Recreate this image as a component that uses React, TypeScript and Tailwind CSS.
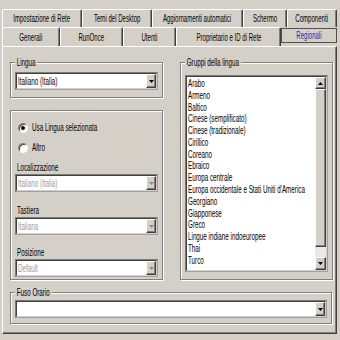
import type { ReactNode } from 'react';

// Text in the reference is squeezed horizontally, so labels are narrowed with scale-x
function T({ children, className = '' }: { children: ReactNode; className?: string }) {
  return (
    <span className={`inline-block whitespace-nowrap origin-left scale-x-[0.57] ${className}`}>{children}</span>
  );
}

const row1 = [
  { label: 'Impostazione di Rete', w: 'w-[80px]' },
  { label: 'Temi del Desktop', w: 'w-[70px]' },
  { label: 'Aggiornamenti automatici', w: 'w-[91px]' },
  { label: 'Schermo', w: 'w-[44px]' },
  { label: 'Componenti', w: 'w-[50px]' },
];

const row2 = [
  { label: 'Generali', w: 'w-[58px]' },
  { label: 'RunOnce', w: 'w-[63px]' },
  { label: 'Utenti', w: 'w-[53px]' },
  { label: 'Proprietario e ID di Rete', w: 'w-[105px]' },
];

const groups = [
  'Arabo',
  'Armeno',
  'Baltico',
  'Cinese (semplificato)',
  'Cinese (tradizionale)',
  'Cirillico',
  'Coreano',
  'Ebraico',
  'Europa centrale',
  "Europa occidentale e Stati Uniti d'America",
  'Georgiano',
  'Giapponese',
  'Greco',
  'Lingue indiane indoeuropee',
  'Thai',
  'Turco',
];

function Tab({ label, w }: { label: string; w: string }) {
  return (
    <div
      className={`${w} h-full flex items-center justify-center border-t border-l border-white border-r border-r-[#404040] rounded-t-[2px] shadow-[inset_-1px_0_0_#808080] overflow-visible`}
    >
      <span className="inline-block whitespace-nowrap origin-center scale-x-[0.55] text-[11px] leading-[13px] text-black">
        {label}
      </span>
    </div>
  );
}

function Arrow({ up = false, disabled = false }: { up?: boolean; disabled?: boolean }) {
  return (
    <svg width="5" height="3" viewBox="0 0 5 3">
      <path d={up ? 'M2.5 0L5 3H0Z' : 'M0 0H5L2.5 3Z'} fill={disabled ? '#8a8a8a' : '#000'} />
    </svg>
  );
}

function RaisedButton({ className = '', children }: { className?: string; children?: ReactNode }) {
  return (
    <div
      className={`flex items-center justify-center bg-[#d4d0c8] border border-t-white border-l-white border-b-[#404040] border-r-[#404040] shadow-[inset_-1px_-1px_0_#808080] ${className}`}
    >
      {children}
    </div>
  );
}

function Select({ value = '', disabled = false, w }: { value?: string; disabled?: boolean; w: string }) {
  return (
    <div className={`${w} h-[18px] border border-[#7a7a7a] border-b-[#a0a0a0] border-r-[#a0a0a0]`}>
      <div className="h-full flex border border-t-[#404040] border-l-[#404040] border-b-[#d4d0c8] border-r-[#d4d0c8] bg-white">
        <div className="flex-1 flex items-center pl-[1px] overflow-visible">
          <T className={`text-[11px] leading-[13px] ${disabled ? 'text-[#9c9c9c]' : 'text-black'}`}>{value}</T>
        </div>
        <RaisedButton className="w-[10px] h-full">
          <Arrow disabled={disabled} />
        </RaisedButton>
      </div>
    </div>
  );
}

function Group({ label, className = '', children }: { label: string; className?: string; children?: ReactNode }) {
  return (
    <div className={`relative border border-[#808080] shadow-[inset_1px_1px_0_#fff,1px_1px_0_#fff] ${className}`}>
      {label && (
        <span className="absolute -top-[7px] left-[4px] inline-block whitespace-nowrap origin-left scale-x-[0.57] px-[3px] bg-[#d4d0c8] text-[11px] leading-[13px] text-black">
          {label}
        </span>
      )}
      {children}
    </div>
  );
}

function Radio({ label, checked = false }: { label: string; checked?: boolean }) {
  return (
    <div className="flex items-center h-[13px] pl-[3px]">
      <div className="w-[10px] h-[10px] rounded-full border border-[#808080] border-b-white border-r-white bg-white flex items-center justify-center shadow-[inset_1px_1px_0_#404040]">
        {checked && <div className="w-[4px] h-[4px] rounded-full bg-black" />}
      </div>
      <T className="ml-[4px] text-[11px] leading-[13px] text-black">{label}</T>
    </div>
  );
}

function Label({ text, className = '' }: { text: string; className?: string }) {
  return (
    <div className={`flex items-center h-[13px] pl-[2px] ${className}`}>
      <T className="text-[11px] leading-[13px] text-black">{text}</T>
    </div>
  );
}

export default function App() {
  return (
    <div className="w-[340px] h-[340px] bg-[#d4d0c8] overflow-hidden font-['Liberation_Sans',Arial,sans-serif] pt-[9px] pl-[2px]">
      <div className="flex h-[18px]">
        {row1.map((t) => (
          <Tab key={t.label} {...t} />
        ))}
      </div>
      <div className="flex h-[19px]">
        {row2.map((t) => (
          <Tab key={t.label} {...t} />
        ))}
        <div className="w-[56px] h-[15px] mt-[1px] flex items-center justify-center border border-[#505050] bg-[#d4d0c8]">
          <span className="inline-block whitespace-nowrap origin-center scale-x-[0.55] text-[11px] leading-[13px] text-[#2a2aa8]">
            Regionali
          </span>
        </div>
      </div>

      <div className="w-[335px] h-[288px] border border-t-white border-l-white border-b-[#404040] border-r-[#404040] shadow-[inset_-1px_-1px_0_#808080] pt-[15px] pl-[7px]">
        <div className="flex gap-[17px]">
          <div className="w-[153px] flex flex-col">
            <Group label="Lingua" className="h-[36px] pt-[9px] pl-[4px]">
              <Select w="w-[143px]" value="Italiano (Italia)" />
            </Group>
            <Group label="" className="mt-[12px] h-[170px] pl-[4px] pt-[10px]">
              <Radio label="Usa Lingua selezionata" checked />
              <div className="mt-[7px]">
                <Radio label="Altro" />
              </div>
              <Label text="Localizzazione" className="mt-[7px]" />
              <Select w="w-[143px]" value="Italiano (Italia)" disabled />
              <Label text="Tastiera" className="mt-[12px]" />
              <Select w="w-[143px]" value="Italiana" disabled />
              <Label text="Posizione" className="mt-[11px]" />
              <Select w="w-[143px]" value="Default" disabled />
            </Group>
          </div>

          <Group label="Gruppi della lingua" className="w-[153px] h-[218px] pt-[12px] pl-[4px]">
            <div className="w-[143px] h-[197px] border border-[#7a7a7a] border-b-[#a0a0a0] border-r-[#a0a0a0]">
              <div className="h-full flex border border-t-[#404040] border-l-[#404040] border-b-[#d4d0c8] border-r-[#d4d0c8] bg-white">
                <div className="flex-1 flex flex-col pl-[1px] overflow-hidden">
                  {groups.map((g) => (
                    <div key={g} className="h-[11.8px] flex items-center shrink-0">
                      <T className="text-[11px] leading-[12px] text-black">{g}</T>
                    </div>
                  ))}
                </div>
                <div className="w-[11px] flex flex-col">
                  <RaisedButton className="h-[12px]">
                    <Arrow up />
                  </RaisedButton>
                  <RaisedButton className="h-[158px]" />
                  <div className="flex-1 bg-[#ebe9e5]" />
                  <RaisedButton className="h-[13px]">
                    <Arrow />
                  </RaisedButton>
                </div>
              </div>
            </div>
          </Group>
        </div>

        <Group label="Fuso Orario" className="mt-[12px] w-[322px] h-[32px] pt-[7px] pl-[4px]">
          <Select w="w-[312px]" />
        </Group>
      </div>
    </div>
  );
}
